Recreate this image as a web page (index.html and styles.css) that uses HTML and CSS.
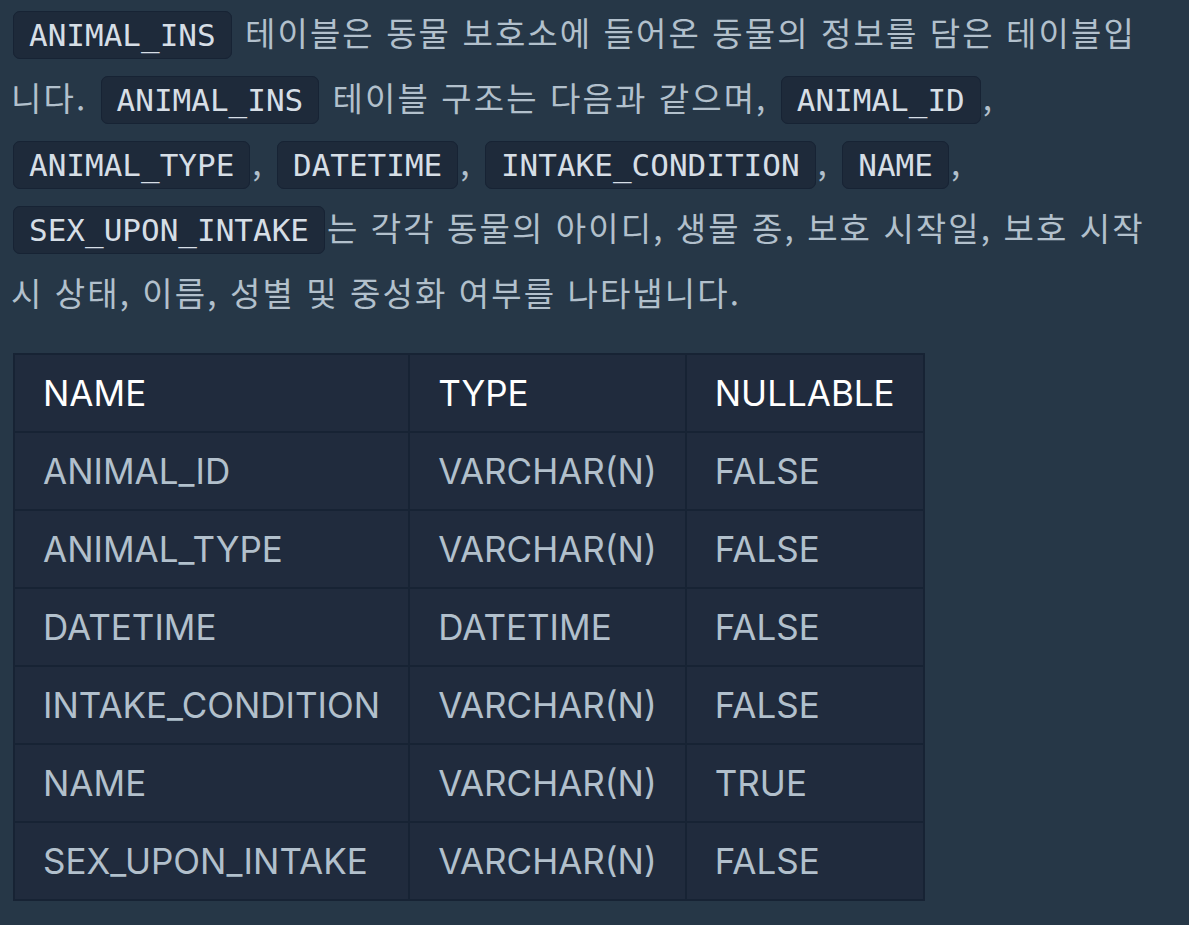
FILE: index.html
```html
<!DOCTYPE html>
<html lang="ko">
<head>
<meta charset="utf-8">
<link rel="stylesheet" href="styles.css">
</head>
<body>
<div class="content">
<p class="desc"><code>ANIMAL_INS</code> 테이블은 동물 보호소에 들어온 동물의 정보를 담은 테이블입니다. <code>ANIMAL_INS</code> 테이블 구조는 다음과 같으며, <code>ANIMAL_ID</code>, <code>ANIMAL_TYPE</code>, <code>DATETIME</code>, <code>INTAKE_CONDITION</code>, <code>NAME</code>, <code>SEX_UPON_INTAKE</code>는 각각 동물의 아이디, 생물 종, 보호 시작일, 보호 시작 시 상태, 이름, 성별 및 중성화 여부를 나타냅니다.</p>
<table class="schema">
<thead>
<tr><th>NAME</th><th>TYPE</th><th>NULLABLE</th></tr>
</thead>
<tbody>
<tr><td>ANIMAL_ID</td><td>VARCHAR(N)</td><td>FALSE</td></tr>
<tr><td>ANIMAL_TYPE</td><td>VARCHAR(N)</td><td>FALSE</td></tr>
<tr><td>DATETIME</td><td>DATETIME</td><td>FALSE</td></tr>
<tr><td>INTAKE_CONDITION</td><td>VARCHAR(N)</td><td>FALSE</td></tr>
<tr><td>NAME</td><td>VARCHAR(N)</td><td>TRUE</td></tr>
<tr><td>SEX_UPON_INTAKE</td><td>VARCHAR(N)</td><td>FALSE</td></tr>
</tbody>
</table>
</div>
</body>
</html>
```

FILE: styles.css
```css
html, body {
  margin: 0;
  padding: 0;
  background: #263747;
}
.content {
  padding: 0 30px 0 11px;
  font-family: "Noto Sans CJK KR", "Noto Sans", sans-serif;
  color: #b2c0cc;
}
.desc {
  margin: 0 0 28px;
  font-size: 33px;
  letter-spacing: 2.1px;
  line-height: 65px;
}
.desc code {
  font-family: "DejaVu Sans Mono", monospace;
  font-size: 31px;
  line-height: 36px;
  letter-spacing: 0;
  color: #d6dee6;
  background: #1e2a3a;
  border: 1px solid #172334;
  border-radius: 7px;
  padding: 5px 15px;
  margin: 0 2px;
}
.schema {
  border-collapse: collapse;
  margin-left: 2px;
  background: #202b3d;
  font-family: Inter, "Noto Sans", sans-serif;
  font-size: 35px;
  border: 2px solid #172334;
}
.schema th, .schema td {
  border: 2px solid #172334;
  padding: 11px 28px;
  line-height: 54px;
  text-align: left;
  font-weight: 400;
}
.schema th {
  color: #ffffff;
}
.schema td {
  color: #b2c0cc;
}
```
